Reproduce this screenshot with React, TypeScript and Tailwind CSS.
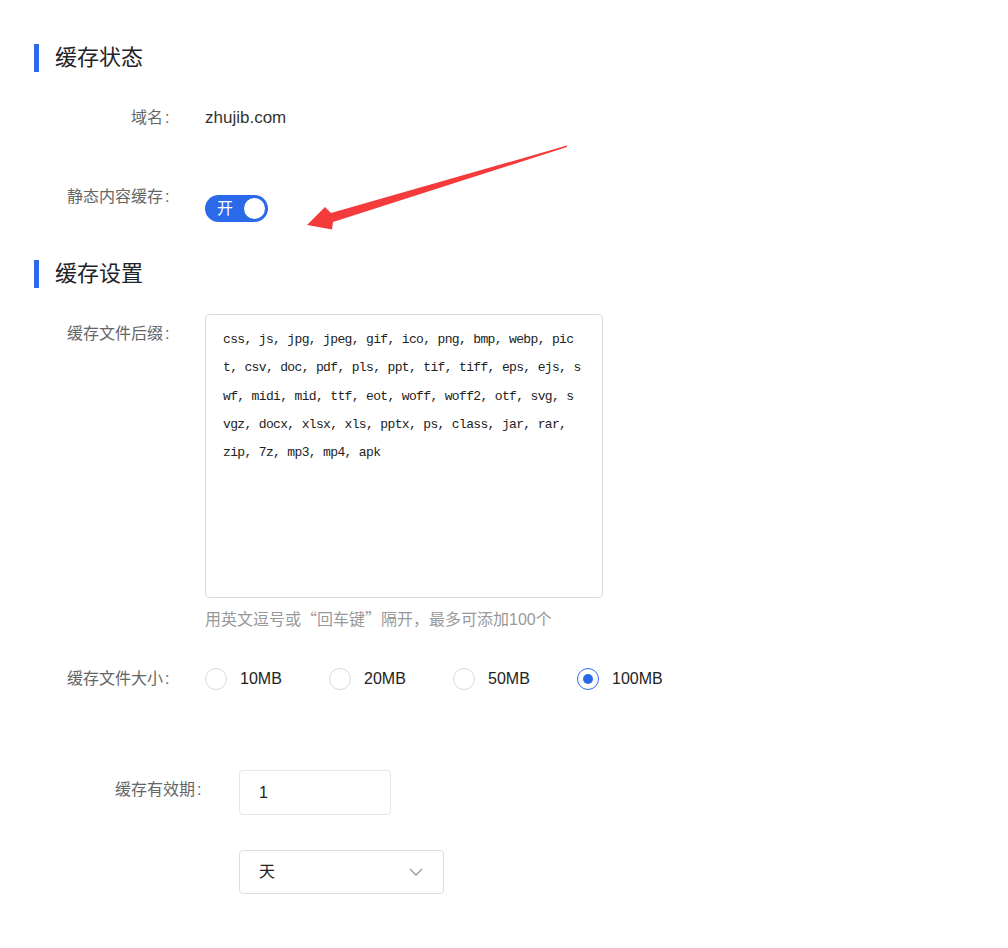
import React from "react";

const font = { fontFamily: '"Liberation Sans", "Noto Sans CJK SC", sans-serif' };

const suffixLines = [
  "css, js, jpg, jpeg, gif, ico, png, bmp, webp, pic",
  "t, csv, doc, pdf, pls, ppt, tif, tiff, eps, ejs, s",
  "wf, midi, mid, ttf, eot, woff, woff2, otf, svg, s",
  "vgz, docx, xlsx, xls, pptx, ps, class, jar, rar,",
  "zip, 7z, mp3, mp4, apk",
];

function SectionTitle({ title, className }: { title: string; className?: string }) {
  return (
    <div className={"flex items-center pl-[34px] " + (className ?? "")}>
      <div className="h-[28px] w-[5px] bg-[#2a6ae9]" />
      <span className="ml-[16px] text-[22px] leading-[28px] text-[#1f2329]">{title}</span>
    </div>
  );
}

function Label({ text, className }: { text: string; className?: string }) {
  return (
    <div
      className={
        "flex h-[24px] w-[173px] shrink-0 justify-end text-[16px] leading-[24px] text-[#666] " + (className ?? "")
      }
    >
      <span>{text}</span>
      <span className="w-[10px] pl-[2px]">:</span>
    </div>
  );
}

function Radio({ label, checked }: { label: string; checked?: boolean }) {
  return (
    <div className="flex w-[124px] items-center">
      <span
        className={
          "flex h-[22px] w-[22px] items-center justify-center rounded-full border bg-white " +
          (checked ? "border-[#2a6ae9]" : "border-[#d9d9d9]")
        }
      >
        {checked && <span className="h-[10px] w-[10px] rounded-full bg-[#2a6ae9]" />}
      </span>
      <span className="ml-[13px] text-[16px] leading-[24px] text-[#222]">{label}</span>
    </div>
  );
}

export default function App() {
  return (
    <div className="relative min-h-[948px] w-[1008px] bg-white pt-[44px]" style={font}>
      <SectionTitle title="缓存状态" />

      <div className="mt-[34px] flex items-center">
        <Label text="域名" />
        <div className="ml-[32px] text-[17px] leading-[24px] text-[#333]">zhujib.com</div>
      </div>

      <div className="mt-[55px] flex items-start">
        <Label text="静态内容缓存" />
        <div className="ml-[32px] mt-[10px] flex h-[27px] w-[63px] items-center justify-between rounded-full bg-[#2a6ae9] pl-[12px] pr-[3px]">
          <span className="text-[16px] leading-none text-white">开</span>
          <span className="h-[21px] w-[21px] rounded-full bg-white" />
        </div>
      </div>

      <SectionTitle title="缓存设置" className="mt-[38px]" />

      <div className="mt-[26px] flex items-start">
        <Label text="缓存文件后缀" className="mt-[8px]" />
        <div className="ml-[32px]">
          <div className="h-[284px] w-[398px] rounded-[4px] border border-[#d9d9d9] pl-[17px] pt-[11px]">
            {suffixLines.map((l) => (
              <div
                key={l}
                className="whitespace-pre text-[13px] leading-[28.3px] tracking-[-0.65px] text-[#222]"
                style={{ fontFamily: '"Liberation Mono", monospace' }}
              >
                {l}
              </div>
            ))}
          </div>
          <div
            className="mt-[8px] h-[24px] overflow-hidden text-[16px] leading-[24px] text-[#999]"
            style={{ fontFamily: '"Noto Sans CJK SC", sans-serif' }}
          >
            用英文逗号或“回车键”隔开，最多可添加
            <span style={{ fontFamily: '"Liberation Sans", sans-serif' }}>100</span>个
          </div>
        </div>
      </div>

      <div className="mt-[37px] flex h-[24px] items-center">
        <Label text="缓存文件大小" />
        <div className="ml-[32px] flex">
          <Radio label="10MB" />
          <Radio label="20MB" />
          <Radio label="50MB" />
          <Radio label="100MB" checked />
        </div>
      </div>

      <div className="mt-[79px] flex items-start">
        <Label text="缓存有效期" className="mt-[8px] w-[205px]" />
        <div className="ml-[34px]">
          <div className="flex h-[45px] w-[152px] items-center rounded-[4px] border border-[#e6e6e6] pl-[19px] text-[16px] text-[#222]">
            1
          </div>
          <div className="mt-[35px] flex h-[44px] w-[205px] items-center justify-between rounded-[4px] border border-[#dcdcdc] pl-[19px] pr-[20px] text-[16px] text-[#222]">
            <span>天</span>
            <svg width="14" height="8" viewBox="0 0 14 8" fill="none">
              <path d="M1 1l6 6 6-6" stroke="#999" strokeWidth="1.3" />
            </svg>
          </div>
        </div>
      </div>

      <svg className="pointer-events-none absolute left-0 top-0" width="1008" height="948">
        <polygon points="567,145.5 331,213 325,207 307,225 332,229.5 333,222 567,147" fill="#f43a3a" />
      </svg>
    </div>
  );
}
